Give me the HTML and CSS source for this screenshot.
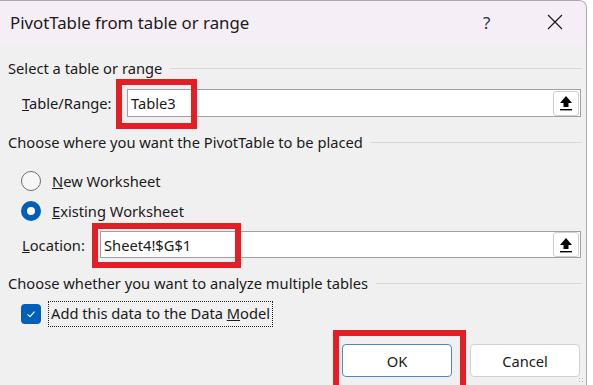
FILE: index.html
```html
<!DOCTYPE html>
<html lang="en">
<head>
    <meta charset="UTF-8">
    <title>PivotTable from table or range</title>
    <link rel="stylesheet" href="styles.css">
</head>
<body>

<div class="window">
    <div class="titlebar">
        <div class="title">PivotTable from table or range</div>
        <div class="title-help">?</div>
        <div class="title-close">
            <svg width="16" height="16" viewBox="0 0 16 16">
                <path d="M1 1 L15 15 M15 1 L1 15" stroke="#1a1a1a" stroke-width="1.2" fill="none"/>
            </svg>
        </div>
    </div>

    <div class="content">
        <div class="group-head head-1">
            <span>Select a table or range</span>
            <div class="group-line"></div>
        </div>

        <div class="field-row row-1">
            <label class="field-label label-range"><u>T</u>able/Range:</label>
            <div class="ref-box">
                <span class="ref-text">Table3</span>
                <div class="ref-btn">
                    <svg width="14" height="16" viewBox="0 0 14 16">
                        <path d="M7 1 L13 8 L9.5 8 L9.5 12 L4.5 12 L4.5 8 L1 8 Z" fill="#000"/>
                        <rect x="1" y="14" width="12" height="1.4" fill="#000"/>
                    </svg>
                </div>
            </div>
        </div>

        <div class="group-head head-2">
            <span>Choose where you want the PivotTable to be placed</span>
            <div class="group-line"></div>
        </div>

        <div class="option option-1">
            <span class="radio"></span>
            <span><u>N</u>ew Worksheet</span>
        </div>
        <div class="option option-2">
            <span class="radio checked"></span>
            <span><u>E</u>xisting Worksheet</span>
        </div>

        <div class="field-row row-2">
            <label class="field-label label-location"><u>L</u>ocation:</label>
            <div class="ref-box">
                <span class="ref-text">Sheet4!$G$1</span>
                <div class="ref-btn">
                    <svg width="14" height="16" viewBox="0 0 14 16">
                        <path d="M7 1 L13 8 L9.5 8 L9.5 12 L4.5 12 L4.5 8 L1 8 Z" fill="#000"/>
                        <rect x="1" y="14" width="12" height="1.4" fill="#000"/>
                    </svg>
                </div>
            </div>
        </div>

        <div class="group-head head-3">
            <span>Choose whether you want to analyze multiple tables</span>
            <div class="group-line"></div>
        </div>

        <div class="option option-check">
            <span class="checkbox">
                <svg width="12" height="12" viewBox="0 0 12 12">
                    <path d="M2.5 6.3 L5 8.6 L9.5 3.6" stroke="#fff" stroke-width="1.1" fill="none"/>
                </svg>
            </span>
            <span class="focus-label">Add this data to the Data <u>M</u>odel</span>
        </div>

        <div class="buttons">
            <button class="btn btn-default">OK</button>
            <button class="btn">Cancel</button>
        </div>
    </div>

    <div class="grip"></div>

    <!-- annotation boxes -->
    <div class="mark mark-range"></div>
    <div class="mark mark-location"></div>
    <div class="mark mark-ok"></div>
</div>

</body>
</html>
```

FILE: styles.css
```css
body {
    margin: 0;
    background-color: #ffffff;
    font-family: "Noto Sans", "Open Sans", sans-serif;
    font-size: 14.7px;
    color: #1a1a1a;
    overflow: hidden;
}
.window {
    position: relative;
    width: 587px;
    height: 385px;
    background-color: #f0f0f0;
    border-top: 1px solid #a9a9a9;
    border-right: 1px solid #a9a9a9;
    border-top-right-radius: 8px;
    overflow: hidden;
    box-sizing: border-box;
}
.titlebar {
    height: 44px;
    background-color: #f5eef6;
    display: flex;
    align-items: center;
}
.title {
    font-size: 16.8px;
    padding-left: 10px;
    flex: 1;
    margin-top: -1px;
}
.title-help {
    width: 20px;
    font-size: 17px;
    color: #333;
    margin-right: 44px;
    margin-top: -2px;
}
.title-close {
    width: 16px;
    height: 16px;
    margin-right: 23px;
    margin-top: -2px;
}
.content {
    padding: 0 5px 0 8px;
    display: flex;
    flex-direction: column;
}
.group-head {
    height: 20px;
    display: flex;
    align-items: center;
}
.group-line {
    flex: 1;
    height: 1px;
    background-color: #d9d9d9;
    margin-left: 8px;
    margin-right: -1px;
}
.head-1 { margin-top: 13px; }
.head-2 { margin-top: 15px; }
.head-3 { margin-top: 15px; }
.field-row {
    display: flex;
    align-items: center;
}
.row-1 { margin-top: 11px; height: 28px; }
.row-2 { margin-top: 10px; height: 27px; }
.field-label {
    padding-left: 14px;
    box-sizing: border-box;
}
.label-range { width: 119px; }
.label-location { width: 92px; }
.ref-box {
    flex: 1;
    height: 100%;
    background-color: #ffffff;
    border: 1px solid #a0a0a0;
    box-sizing: border-box;
    display: flex;
    align-items: center;
}
.ref-text {
    flex: 1;
    padding-left: 3px;
}
.ref-btn {
    width: 26px;
    height: 25px;
    margin-right: 1px;
    background-color: #ffffff;
    border: 1px solid #cfcfcf;
    border-radius: 3px;
    box-sizing: border-box;
    display: flex;
    align-items: center;
    justify-content: center;
}
.option {
    height: 20px;
    display: flex;
    align-items: center;
    padding-left: 13px;
}
.option-1 { margin-top: 19px; }
.option-2 { margin-top: 10px; }
.option-check { margin-top: 11px; }
.radio {
    width: 18px;
    height: 18px;
    border: 1px solid #6e6e6e;
    border-radius: 50%;
    margin-right: 11px;
    background-color: #f7f7f7;
}
.radio.checked {
    width: 20px;
    height: 20px;
    border: none;
    background-color: #005fb8;
    display: flex;
    align-items: center;
    justify-content: center;
}
.radio.checked::after {
    content: "";
    width: 8px;
    height: 8px;
    border-radius: 50%;
    background-color: #ffffff;
}
.checkbox {
    width: 20px;
    height: 20px;
    border-radius: 4px;
    background-color: #005fb8;
    margin-right: 8px;
    display: flex;
    align-items: center;
    justify-content: center;
}
.focus-label {
    outline: 1px dotted #222;
    padding: 1px 2px 3px 2px;
}
.buttons {
    margin-top: 20px;
    display: flex;
    justify-content: flex-end;
    gap: 18px;
    padding-right: 1px;
}
.btn {
    width: 110px;
    height: 33px;
    background-color: #ffffff;
    border: 1px solid #d0d0d0;
    border-radius: 4px;
    font-family: "Noto Sans", "Open Sans", sans-serif;
    font-size: 14.7px;
    color: #1a1a1a;
}
.btn-default {
    border-color: #4a88c7;
}
.grip {
    position: absolute;
    right: 2px;
    bottom: 2px;
    width: 6px;
    height: 6px;
    background-image: radial-gradient(#b8b8b8 40%, transparent 45%);
    background-size: 3px 3px;
}
.mark {
    position: absolute;
    border: 6px solid #e31e24;
    box-sizing: border-box;
}
.mark-range {
    left: 116px;
    top: 78px;
    width: 81px;
    height: 50px;
}
.mark-location {
    left: 92px;
    top: 222px;
    width: 149px;
    height: 45px;
}
.mark-ok {
    left: 333px;
    top: 329px;
    width: 133px;
    height: 70px;
}
```
